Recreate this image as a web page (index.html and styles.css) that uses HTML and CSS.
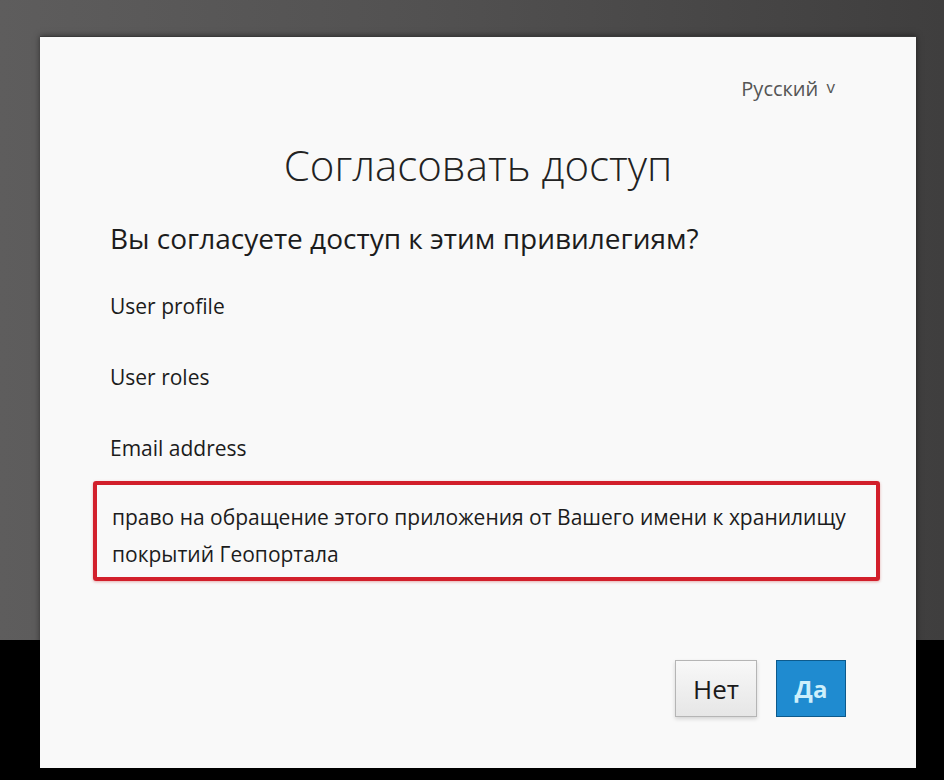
FILE: index.html
```html
<!DOCTYPE html>
<html lang="ru">
<head>
  <meta charset="UTF-8" />
  <meta name="viewport" content="width=device-width, initial-scale=1.0" />
  <title>Согласовать доступ</title>
  <link rel="stylesheet" href="styles.css">
</head>
<body>

  <div class="card">
    <div class="lang">Русский <span class="caret">v</span></div>

    <h1 class="title">Согласовать доступ</h1>

    <div class="content">
      <h2 class="question">Вы согласуете доступ к этим привилегиям?</h2>

      <ul class="scopes">
        <li>User profile</li>
        <li>User roles</li>
        <li>Email address</li>
      </ul>

      <div class="highlight">
        право на обращение этого приложения от Вашего имени к хранилищу покрытий Геопортала
      </div>

      <div class="actions">
        <button class="btn btn-no">Нет</button>
        <button class="btn btn-yes">Да</button>
      </div>
    </div>
  </div>

</body>
</html>
```

FILE: styles.css
```css
* {
  margin: 0;
  padding: 0;
  box-sizing: border-box;
}

html, body {
  height: 100%;
}

body {
  font-family: 'Open Sans', 'Noto Sans', sans-serif;
  background:
    linear-gradient(180deg, transparent 0, transparent 640px, #000 640px),
    linear-gradient(90deg, #5e5d5d 0%, #525151 45%, #3f3e3e 100%);
  color: #1c1c1c;
  overflow: hidden;
  padding: 36px 0 0 40px;
}

.card {
  width: 876px;
  height: 732px;
  background: #f9f9f9;
  border-top: 1px solid #3a3a3a;
  box-shadow: 0 0 6px rgba(0, 0, 0, 0.5);
}

.lang {
  text-align: right;
  padding: 37px 81px 0 0;
  font-size: 20px;
  line-height: 26px;
  color: #555;
}

.caret {
  font-size: 17px;
  margin-left: 3px;
  vertical-align: 3px;
}

.title {
  text-align: center;
  font-size: 42px;
  font-weight: 300;
  color: #222;
  margin-top: 37px;
  line-height: 52px;
}

.content {
  padding: 0 70px;
}

.question {
  font-size: 28px;
  font-weight: 400;
  color: #1c1c1c;
  margin-top: 29px;
  line-height: 36px;
}

.scopes {
  list-style: none;
  margin-top: 36px;
}

.scopes li {
  font-size: 21px;
  line-height: 28px;
  margin-bottom: 43px;
}

.scopes li:last-child {
  margin-bottom: 0;
}

.highlight {
  margin: 19px -34px 0 -17px;
  border: 4px solid #d21f2b;
  border-radius: 3px;
  padding: 14px 20px 4px 15px;
  font-size: 21px;
  line-height: 37px;
  box-shadow: 0 1px 3px rgba(180, 0, 0, 0.3);
}

.actions {
  display: flex;
  justify-content: flex-end;
  gap: 19px;
  margin-top: 79px;
}

.btn {
  font-family: inherit;
  height: 57px;
  font-size: 26px;
  cursor: pointer;
}

.btn-no {
  width: 82px;
  background: linear-gradient(180deg, #f8f8f8, #e6e6e6);
  border: 1px solid #b5b5b5;
  color: #1a1a1a;
  box-shadow: 0 2px 4px rgba(0, 0, 0, 0.15);
}

.btn-yes {
  width: 70px;
  font-size: 24px;
  background: #1f8bd0;
  border: 1px solid #0d5a8c;
  color: #cdeffb;
  font-weight: 700;
}
```
